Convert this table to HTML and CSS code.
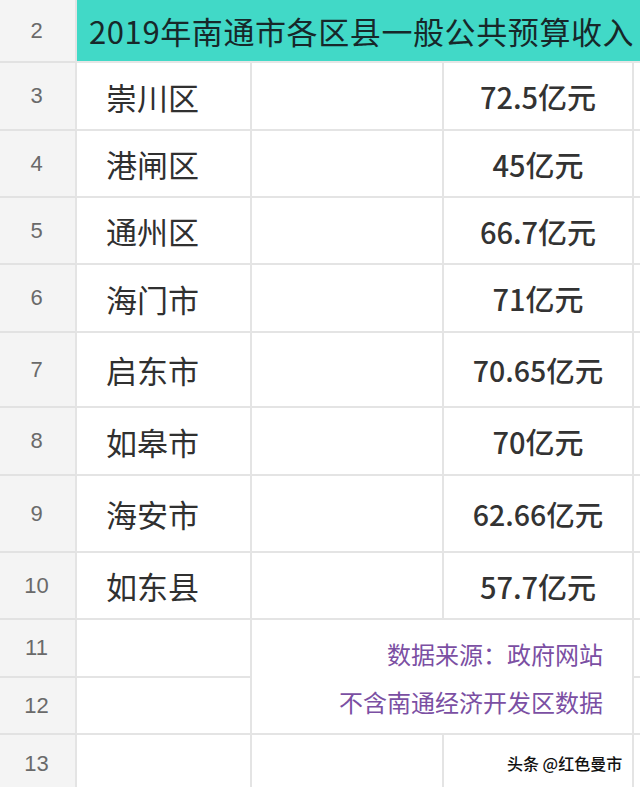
FILE: index.html
```
<!DOCTYPE html>
<html lang="zh">
<head>
<meta charset="utf-8">
<title>2019年南通市各区县一般公共预算收入</title>
<link rel="stylesheet" href="styles.css">
</head>
<body>
<div class="sheet">
  <div class="num r2">2</div>
  <div class="title r2">2019年南通市各区县一般公共预算收入</div>

  <div class="num r3">3</div><div class="cell name r3">崇川区</div><div class="cell r3"></div><div class="cell val r3">72.5亿元</div><div class="cell edge r3"></div>
  <div class="num r4">4</div><div class="cell name r4">港闸区</div><div class="cell r4"></div><div class="cell val r4">45亿元</div><div class="cell edge r4"></div>
  <div class="num r5">5</div><div class="cell name r5">通州区</div><div class="cell r5"></div><div class="cell val r5">66.7亿元</div><div class="cell edge r5"></div>
  <div class="num r6">6</div><div class="cell name r6">海门市</div><div class="cell r6"></div><div class="cell val r6">71亿元</div><div class="cell edge r6"></div>
  <div class="num r7">7</div><div class="cell name r7">启东市</div><div class="cell r7"></div><div class="cell val small r7">70.65亿元</div><div class="cell edge r7"></div>
  <div class="num r8">8</div><div class="cell name r8">如皋市</div><div class="cell r8"></div><div class="cell val r8">70亿元</div><div class="cell edge r8"></div>
  <div class="num r9">9</div><div class="cell name r9">海安市</div><div class="cell r9"></div><div class="cell val small r9">62.66亿元</div><div class="cell edge r9"></div>
  <div class="num r10">10</div><div class="cell name r10">如东县</div><div class="cell r10"></div><div class="cell val r10">57.7亿元</div><div class="cell edge r10"></div>

  <div class="num r11">11</div><div class="cell r11"></div>
  <div class="cell note"><div>数据来源：政府网站</div><div>不含南通经济开发区数据</div></div>
  <div class="cell edge r11"></div>
  <div class="num r12">12</div><div class="cell r12"></div><div class="cell edge r12"></div>

  <div class="num r13">13</div><div class="cell r13"></div><div class="cell r13"></div><div class="cell r13"></div><div class="cell edge r13"></div>

  <div class="watermark">头条 @红色曼市</div>
</div>
</body>
</html>
```

FILE: styles.css
```
html, body {
  margin: 0;
  padding: 0;
  background: #ffffff;
}

.sheet {
  position: relative;
  width: 640px;
  height: 787px;
  overflow: hidden;
  display: grid;
  grid-template-columns: 77px 175px 192px 190px 6px;
  grid-template-rows: 63px 68px 67px 67px 68px 75px 68px 77px 67px 58px 57px 60px;
  font-family: "Noto Sans CJK SC", "Liberation Sans", sans-serif;
  color: #2b2b2b;
}

.num {
  grid-column: 1;
  box-sizing: border-box;
  background: #f4f4f4;
  border-right: 2px solid #e4e4e4;
  border-bottom: 2px solid #e2e2e2;
  display: flex;
  align-items: center;
  justify-content: center;
  font-family: "Liberation Sans", sans-serif;
  font-size: 22px;
  color: #6a6a6a;
  padding-right: 2px;
}

.title {
  grid-column: 2 / 6;
  box-sizing: border-box;
  background: #41d9c7;
  border-bottom: 2px solid #e6e6e6;
  display: flex;
  align-items: center;
  padding-left: 12px;
  font-size: 31px;
  letter-spacing: 0.6px;
  color: #17282a;
  white-space: nowrap;
}

.cell {
  box-sizing: border-box;
  border-right: 2px solid #e4e4e4;
  border-bottom: 2px solid #e4e4e4;
  background: #ffffff;
  display: flex;
  align-items: center;
}

.edge {
  border-right: none;
}

.name {
  padding-left: 29px;
  font-size: 31px;
  color: #303030;
}

.val {
  justify-content: center;
  font-size: 29px;
  font-weight: 500;
  color: #333333;
}

.val.small {
  font-size: 28.5px;
}

.note {
  grid-column: 3 / 5;
  grid-row: 10 / 12;
  flex-direction: column;
  align-items: flex-end;
  justify-content: center;
  padding-right: 29px;
  padding-top: 2px;
  font-size: 24px;
  line-height: 48px;
  color: #7b4fa3;
}

.watermark {
  position: absolute;
  left: 507px;
  top: 751px;
  font-size: 16px;
  line-height: 24px;
  font-weight: 500;
  color: #111111;
  white-space: nowrap;
  text-shadow: 0 0 2px #ffffff, 0 0 2px #ffffff;
}
```
